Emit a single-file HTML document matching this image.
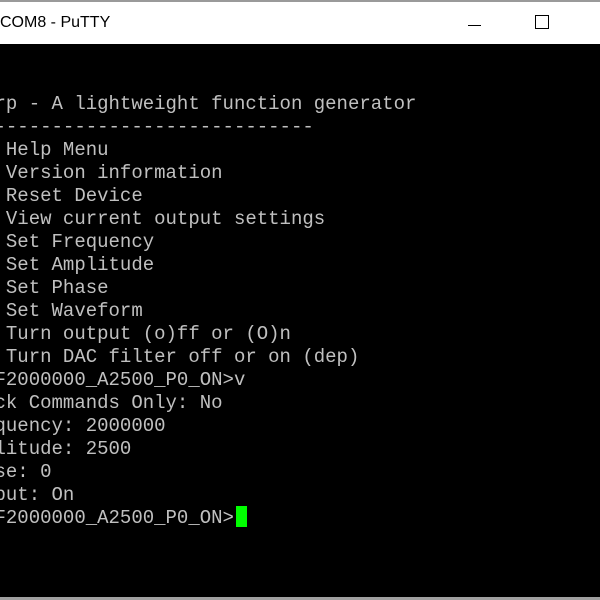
<!DOCTYPE html>
<html><head><style>
html,body{margin:0;padding:0;width:600px;height:600px;overflow:hidden;background:#fff}
.tb{position:absolute;left:0;top:0;width:600px;height:44px;background:#fff;border-top:2px solid #9a9a9a;box-sizing:border-box}
.title{position:absolute;left:0;top:12px;font:16px "Liberation Sans",sans-serif;color:#000}
.min{position:absolute;left:468px;top:23px;width:13px;height:1px;background:#000}
.max{position:absolute;left:535px;top:13px;width:12px;height:12px;border:1px solid #000}
.term{position:absolute;left:0;top:44px;width:600px;height:553px;background:#000}
.bot{position:absolute;left:0;top:597px;width:600px;height:3px;background:#a0a0a0}
pre{position:absolute;left:-5.5px;top:93px;margin:0;font:19px/23px "Liberation Mono",monospace;color:#c0c0c0;letter-spacing:0}
.cur{position:absolute;left:236px;top:506px;width:11px;height:21px;background:#00ff00}
</style></head><body>
<div class="tb"><div class="title">COM8 - PuTTY</div><div class="min"></div><div class="max"></div></div>
<div class="term"></div>
<pre>rp - A lightweight function generator
----------------------------
 Help Menu
 Version information
 Reset Device
 View current output settings
 Set Frequency
 Set Amplitude
 Set Phase
 Set Waveform
 Turn output (o)ff or (O)n
 Turn DAC filter off or on (dep)
F2000000_A2500_P0_ON&gt;v
ck Commands Only: No
quency: 2000000
litude: 2500
se: 0
put: On
F2000000_A2500_P0_ON&gt;</pre>
<div class="cur"></div>
<div class="bot"></div>
</body></html>
